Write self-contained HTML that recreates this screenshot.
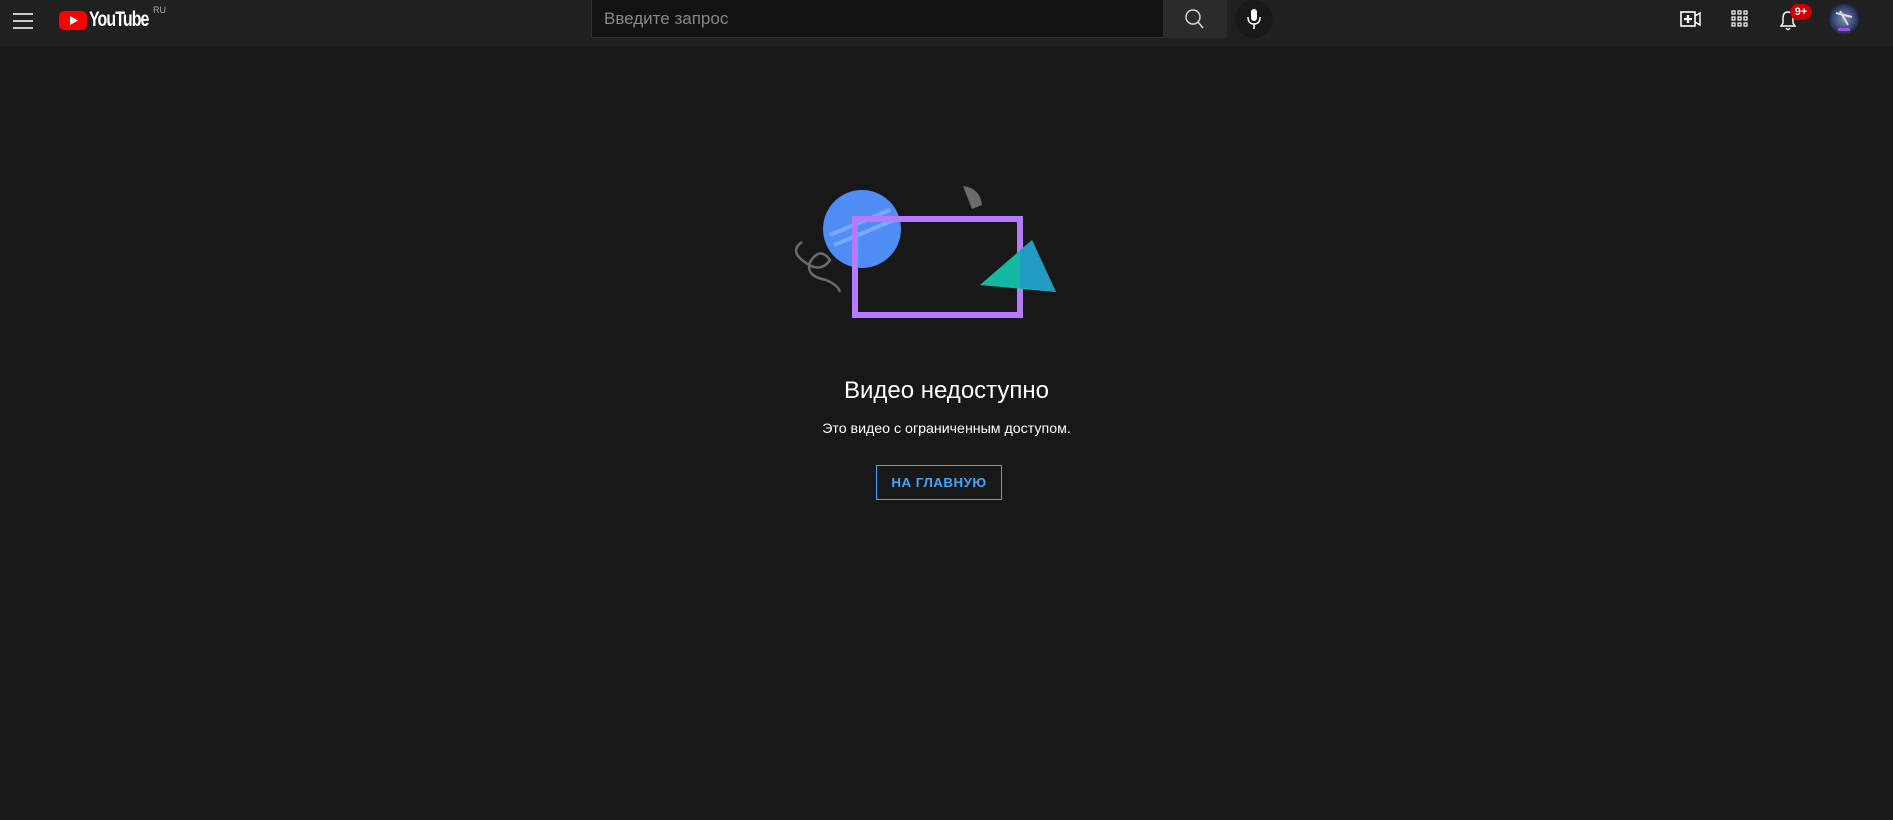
<!DOCTYPE html>
<html><head><meta charset="utf-8"><style>
*{margin:0;padding:0;box-sizing:border-box}
body{width:1893px;height:820px;background:#181818;font-family:"Liberation Sans",Arial,sans-serif;overflow:hidden;position:relative;color:#fff}
.hdr{position:absolute;left:0;top:0;width:1893px;height:46px;background:#202020}
.abs{position:absolute}
.search{left:591px;top:0;width:573px;height:38px;background:#121212;border:1px solid #303030;border-top:none;color:#888;font-size:17px;padding:9px 12px}
.sbtn{left:1163px;top:0;width:64px;height:38px;background:#2b2b2b;border-radius:0 0 2px 0}
.mic{left:1235px;top:0;width:38px;height:38px;border-radius:50%;background:#181818}
h1{position:absolute;left:0;width:1893px;top:377px;text-align:center;font-weight:400;font-size:24px;color:#fff}
.sub{position:absolute;left:0;width:1893px;top:421px;text-align:center;font-size:14.2px;color:#fff}
.btn{left:876px;top:465px;width:126px;height:35px;border:1px solid #3ea6ff;color:#3ea6ff;font-size:13.3px;font-weight:bold;text-align:center;line-height:33px;letter-spacing:.5px}
</style></head><body>
<div class="hdr"></div>
<svg class="abs" style="left:13px;top:12px" width="22" height="18"><g stroke="#fff" stroke-width="1.6"><line x1="0" y1="2" x2="20" y2="2"/><line x1="0" y1="9" x2="20" y2="9"/><line x1="0" y1="16" x2="20" y2="16"/></g></svg>
<svg class="abs" style="left:59px;top:11px" width="28" height="19"><rect width="28" height="19" rx="5" fill="#f00"/><path d="M11 5 L19 9.5 L11 14Z" fill="#fff"/></svg>
<div class="abs" style="left:89px;top:8px;font-size:21px;font-weight:bold;letter-spacing:-1.2px;transform:scaleX(.76);transform-origin:left">YouTube</div>
<div class="abs" style="left:153px;top:5px;font-size:9px;color:#aaa">RU</div>
<div class="abs search">Введите запрос</div>
<div class="abs sbtn"><svg width="64" height="38"><circle cx="30" cy="17" r="7" fill="none" stroke="#ddd" stroke-width="1.4"/><line x1="35" y1="22" x2="40" y2="28" stroke="#ddd" stroke-width="1.4"/></svg></div>
<div class="abs mic"><svg width="38" height="38"><rect x="16" y="9" width="6" height="12" rx="3" fill="#fff"/><path d="M13 17 Q13 24 19 24 Q25 24 25 17" fill="none" stroke="#fff" stroke-width="1.5"/><line x1="19" y1="24" x2="19" y2="29" stroke="#fff" stroke-width="1.5"/></svg></div>
<svg class="abs" style="left:1679px;top:8px" width="24" height="22"><rect x="2" y="4" width="14" height="14" fill="none" stroke="#fff" stroke-width="1.6"/><path d="M16 8 L21 5 V17 L16 14" fill="none" stroke="#fff" stroke-width="1.4"/><path d="M9 7V15M5 11H13" stroke="#fff" stroke-width="2.2"/></svg>
<svg class="abs" style="left:1731px;top:10px" width="18" height="18"><g fill="none" stroke="#fff" stroke-width="1.2"><rect x="1" y="1" width="3" height="3"/><rect x="7" y="1" width="3" height="3"/><rect x="13" y="1" width="3" height="3"/><rect x="1" y="7" width="3" height="3"/><rect x="7" y="7" width="3" height="3"/><rect x="13" y="7" width="3" height="3"/><rect x="1" y="13" width="3" height="3"/><rect x="7" y="13" width="3" height="3"/><rect x="13" y="13" width="3" height="3"/></g></svg>
<svg class="abs" style="left:1777px;top:8px" width="22" height="24"><path d="M4 18 H18 L16 15 V10 Q16 4 11 4 Q6 4 6 10 V15Z" fill="none" stroke="#fff" stroke-width="1.4"/><path d="M9 20 Q11 23 13 20" fill="none" stroke="#fff" stroke-width="1.4"/></svg>
<div class="abs" style="left:1790px;top:4px;width:22px;height:16px;border-radius:8px;background:#c00;color:#fff;font-size:11px;font-weight:bold;text-align:center;line-height:16px">9+</div>
<svg class="abs" style="left:1828px;top:3px" width="32" height="32"><defs><radialGradient id="g"><stop offset="0" stop-color="#7a8fb8"/><stop offset="1" stop-color="#1f2a55"/></radialGradient></defs><circle cx="16" cy="16" r="15" fill="url(#g)"/><path d="M8 10 L24 14 M12 8 L20 22" stroke="#ddd" stroke-width="2"/><rect x="10" y="25" width="12" height="3" fill="#a050e0"/></svg>
<svg class="abs" style="left:790px;top:180px" width="280" height="150">
<circle cx="72" cy="49" r="39" fill="#4f8df5"/>
<path d="M40 55 L100 30 M44 65 L104 40" stroke="#78a9ff" stroke-width="4"/>
<path d="M173 6 Q190 8 192 25 L182 29Z" fill="#6b6b6b"/>
<path d="M12 62 Q0 70 12 80 Q30 95 40 80 Q30 66 20 82 Q15 96 36 100 Q48 105 50 112" fill="none" stroke="#6b6b6b" stroke-width="2.5"/>
<rect x="65" y="39" width="165" height="96" fill="none" stroke="#b57bff" stroke-width="6"/>
<path d="M190 105 L242 60 L266 112Z" fill="#12b9a0"/>
<path d="M230 70 L242 60 L266 112 L230 107Z" fill="#2a8fd0" opacity=".7"/>
</svg>
<h1>Видео недоступно</h1>
<div class="sub">Это видео с ограниченным доступом.</div>
<div class="abs btn">НА ГЛАВНУЮ</div>
</body></html>
